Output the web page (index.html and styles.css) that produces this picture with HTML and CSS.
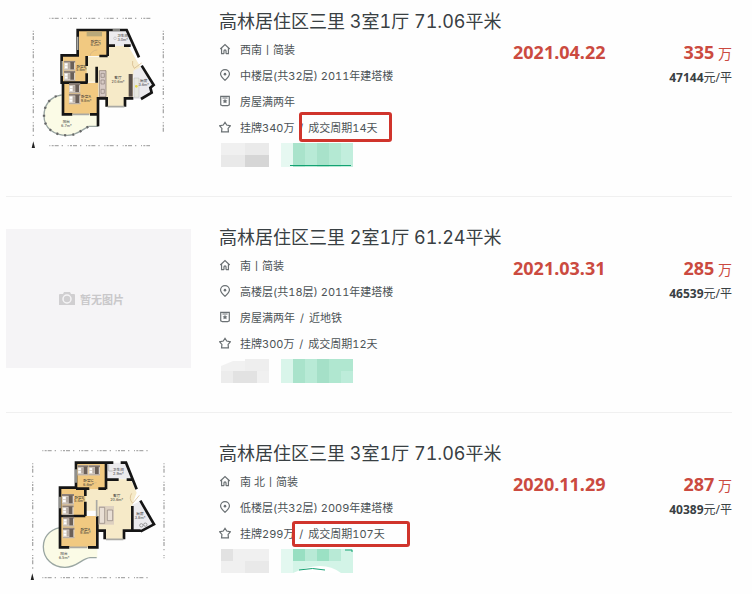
FILE: index.html
```html
<!DOCTYPE html>
<html lang="zh-CN">
<head>
  <meta charset="utf-8" />
  <meta name="viewport" content="width=device-width,initial-scale=1" />
  <title>高林居住区三里 成交记录</title>
  <link rel="stylesheet" href="styles.css">
</head>
<body>

<!-- shared icons and furniture -->
<svg class="defs" width="0" height="0" aria-hidden="true">
  <symbol id="i-home" viewBox="0 0 14 14">
    <path d="M1.500 7 7 1.800 12.500 7M3 6v6.500h2.800M11 6v6.500H8.200M5.800 12.500V9.200a1.200 1.200 0 0 1 2.400 0v3.300"/>
  </symbol>
  <symbol id="i-pin" viewBox="0 0 14 14">
    <path d="M7 13.300C4 10.500 1.800 8.400 1.800 5.900a5.200 5.200 0 0 1 10.400 0C12.200 8.400 10 10.500 7 13.300z"/>
    <circle class="dot" cx="7" cy="6" r="1.500"/>
  </symbol>
  <symbol id="i-tag" viewBox="0 0 14 14">
    <path d="M2 1.500h10v10l-2 1H4l-2-1zM4 3.500h6"/>
    <path class="dot" d="m7 4.500.9 1.600 1.900.2-1.300 1.300.3 1.900L7 8.700l-1.800.8.3-1.900-1.300-1.300 1.900-.2z"/>
  </symbol>
  <symbol id="i-star" viewBox="0 0 14 14">
    <path d="m7 1.500 2 3.200 4.300.9-2.700 3 .4 4.100H3l.4-4.100-2.700-3L5 4.700z"/>
  </symbol>
  <symbol id="bed" viewBox="0 0 36 32">
    <rect width="36" height="32" fill="#ddd5cc"/>
    <rect width="36" height="6" fill="#8d8078"/>
    <rect x="20" y="4" width="12" height="24" fill="#6a5f58"/>
    <rect x="3" y="9" width="8" height="6" fill="#fff"/>
    <rect x="3" y="18" width="8" height="6" fill="#fff"/>
    <path d="M14 8v18M17 8v18M0 30h36" stroke="#9c9088" stroke-width="2"/>
  </symbol>
</svg>

<ul class="list">

  <li class="item">
    <svg class="photo" viewBox="18 39 555 417" role="img" aria-label="户型图">
      <g class="ruler">
        <path d="M148 55H455M148 437H450M100 92V420M490 92V395"/>
      </g>
      <path d="m100 424-5 20h10z" fill="#222"/>
      <path class="balcony" d="M185 285C150 290 132 315 132 348c0 36 30 58 70 58 30 0 45-18 65-27h28v-36H185z"/>
      <path class="rail" d="M185 285C150 290 132 315 132 348c0 36 30 58 70 58 30 0 45-18 65-27h28"/>
      <path class="posts" d="M170 288C146 297 132 318 132 348c0 36 30 58 70 58 30 0 45-18 65-27"/>
      <path class="hall" d="M258 170h65v-35h60l38 65-22 28v67h-24v25h-58v-25h-30v-50h-34z"/>
      <path class="wet" d="M325 90h55l20 48h-75zM400 212l25-12 36 55-8 25-30 17h-23z"/>
      <path class="room" d="M233 90h90v78h-90zM185 168h75v78h-75zM188 248h106v95H188z"/>
      <path class="wall" d="M323 168V90h-90v76h-48v82h4v95h28M185 248h78M260 168v30M260 220v28M270 343h24v-48h26v25M294 295v84M323 168h-25M290 200v48M323 90h57l37 82M323 137h22M372 137h20M425 197l36 58-10 8 4 15-32 19M375 320v-25h25"/>
      <path class="window" d="M187 183v45M233 110v40M323 320h50M218 343h50M338 90h22"/>
      <path class="door" d="M403 205l22-16M403 205a25 25 0 0 1-5-22M270 168a22 22 0 0 1 22-18"/>
      <rect x="260" y="95" width="46" height="14" fill="#b9a97a"/>
      <use href="#bed" x="191" y="182" width="36" height="30"/>
      <use href="#bed" x="191" y="213" width="36" height="30"/>
      <use href="#bed" x="206" y="250" width="36" height="30"/>
      <use href="#bed" x="206" y="280" width="36" height="34"/>
      <path d="M298 212h20v78h-20z" fill="#d8cbc6" stroke="#7d7068" stroke-width="2"/>
      <path d="M303 220h10v12h-10zM303 240h10v12h-10zM303 268h10v12h-10z" fill="none" stroke="#8c8078" stroke-width="2"/>
      <rect x="386" y="222" width="12" height="68" fill="#5a504a"/>
      <path d="M402 234h15v58h-15z" fill="#e8e8e0" stroke="#aaa"/>
      <circle cx="409" cy="259" r="4" fill="#e5d84a"/>
      <circle cx="345" cy="115" r="4" fill="none" stroke="#999"/>
      <g class="label">
        <text x="287" y="128">卧室C</text><text x="287" y="139">6.2m²</text>
        <text x="244" y="203">卧室B</text><text x="244" y="214">5.6m²</text>
        <text x="258" y="294">卧室A</text><text x="258" y="305">9.8m²</text>
        <text x="354" y="236">客厅</text><text x="354" y="248">20.6m²</text>
        <text x="368" y="112">卫生间</text><text x="368" y="123">3.0m²</text>
        <text x="431" y="245">厨房</text><text x="431" y="257">3.6m²</text>
        <text x="199" y="368">阳台</text><text x="199" y="380">6.7m²</text>
      </g>
    </svg>
    <div class="info">
      <h2 class="title">高林居住区三里 3室1厅 71.06平米</h2>
      <ul class="meta">
        <li><svg class="icon"><use href="#i-home"/></svg>西南丨简装</li>
        <li><svg class="icon"><use href="#i-pin"/></svg>中楼层(共32层) 2011年建塔楼</li>
        <li><svg class="icon"><use href="#i-tag"/></svg>房屋满两年</li>
        <li><svg class="icon"><use href="#i-star"/></svg><span>挂牌340万 <i>/</i> <span class="mark">成交周期14天</span></span></li>
      </ul>
      <svg class="mosaic" viewBox="0 0 134 24" aria-hidden="true">
        <rect x="2" width="24" height="12" fill="#f0f0f0"/>
        <rect x="26" width="24" height="12" fill="#eaeaea"/>
        <rect x="2" y="12" width="24" height="12" fill="#e9e9e9"/>
        <rect x="26" y="12" width="24" height="12" fill="#d6d6d6"/>
        <rect x="62" width="12" height="24" fill="#e6f8f1"/>
        <rect x="74" width="12" height="24" fill="#a9e3cb"/>
        <rect x="86" width="12" height="24" fill="#b8ead6"/>
        <rect x="98" width="12" height="24" fill="#a8e2ca"/>
        <rect x="110" width="12" height="24" fill="#b4e9d3"/>
        <rect x="122" width="12" height="24" fill="#c2eedd"/>
        <rect x="71" y="22" width="61" height="1" fill="#14a273"/>
      </svg>
    </div>
    <div class="date">2021.04.22</div>
    <div class="price">
      <div class="total"><b>335</b> 万</div>
      <div class="unit"><b>47144</b>元/平</div>
    </div>
  </li>

  <li class="item">
    <div class="photo empty">
      <svg class="camera" viewBox="0 0 16 14" aria-hidden="true">
        <path d="M1 2h3l1-2h6l1 2h3a1 1 0 0 1 1 1v10H0V3a1 1 0 0 1 1-1z" fill="#d0cfd1"/>
        <circle cx="8" cy="7" r="4" fill="#d0cfd1" stroke="#f5f4f6" stroke-width="1.500"/>
      </svg>
      暂无图片
    </div>
    <div class="info">
      <h2 class="title">高林居住区三里 2室1厅 61.24平米</h2>
      <ul class="meta">
        <li><svg class="icon"><use href="#i-home"/></svg>南丨简装</li>
        <li><svg class="icon"><use href="#i-pin"/></svg>高楼层(共18层) 2011年建塔楼</li>
        <li><svg class="icon"><use href="#i-tag"/></svg><span>房屋满两年 <i>/</i> 近地铁</span></li>
        <li><svg class="icon"><use href="#i-star"/></svg><span>挂牌300万 <i>/</i> 成交周期12天</span></li>
      </ul>
      <svg class="mosaic" viewBox="0 0 134 24" aria-hidden="true">
        <path d="M2 12V7l12-5h12v10z" fill="#f1f1f1"/>
        <rect x="26" width="24" height="12" fill="#eeeeee"/>
        <rect x="2" y="12" width="12" height="12" fill="#ececec"/>
        <rect x="14" y="12" width="24" height="12" fill="#e2e2e2"/>
        <rect x="38" y="12" width="12" height="12" fill="#f0f0f0"/>
        <rect x="62" width="12" height="24" fill="#d9f5ea"/>
        <rect x="74" width="12" height="24" fill="#a9e3cb"/>
        <rect x="86" width="12" height="24" fill="#b8ead6"/>
        <rect x="98" width="12" height="24" fill="#a5e0c8"/>
        <rect x="110" width="12" height="24" fill="#b0e7d0"/>
        <rect x="122" width="12" height="12" fill="#b0e7d0"/>
        <rect x="122" y="12" width="12" height="12" fill="#bdecda"/>
      </svg>
    </div>
    <div class="date">2021.03.31</div>
    <div class="price">
      <div class="total"><b>285</b> 万</div>
      <div class="unit"><b>46539</b>元/平</div>
    </div>
  </li>

  <li class="item">
    <svg class="photo" viewBox="18 45 555 417" role="img" aria-label="户型图">
      <g class="ruler">
        <path d="M127 62H455M127 443H455M98 100V425M492 100V385"/>
      </g>
      <path d="m97 430-5 20h10z" fill="#222"/>
      <path class="balcony" d="M180 293C145 300 130 325 130 350c0 36 28 62 65 62 37 0 50-27 75-29h22v-30H180z"/>
      <path class="rail" d="M180 293C145 300 130 325 130 350c0 36 28 62 65 62 37 0 50-27 75-29h20"/>
      <path class="hall" d="M255 178h63v-30h74l18 40-12 32v82h-25v26h-60v-26h-23v-60h-35z"/>
      <path class="wet" d="M320 98h58l18 48h-76zM397 225l24-12 41 68-40 23h-25z"/>
      <path class="room" d="M228 98h90v80h-90zM180 173h76v85h-76zM180 258h112v94H180z"/>
      <path class="wall" d="M318 178V98h-90v75h-48v179h28M180 258h76M256 178v20M256 215v43M264 352h28V258M228 176h40M295 176h23M292 302h22v26M318 98h22M362 98h16l32 80M318 149h38M380 149h17M421 212l41 71-40 21M372 328v-26h50M397 228v74"/>
      <path class="window" d="M180 200v35M228 118v40M318 328h52M210 352h52M290 210v50"/>
      <path class="door" d="M398 220l20-24M398 220a25 25 0 0 1-3-30M268 176a22 22 0 0 1 22-18"/>
      <use href="#bed" x="232" y="102" width="34" height="38"/>
      <use href="#bed" x="266" y="102" width="34" height="38"/>
      <use href="#bed" x="186" y="192" width="36" height="32"/>
      <use href="#bed" x="186" y="226" width="36" height="30"/>
      <use href="#bed" x="188" y="260" width="36" height="30"/>
      <use href="#bed" x="188" y="292" width="36" height="34"/>
      <path d="M296 228h46v56h-46z" fill="#ddd0c0"/>
      <path d="M298 232h16v48h-16zM322 240h16v32h-16z" fill="#e9dfd5" stroke="#8c8078" stroke-width="2"/>
      <circle cx="424" cy="286" r="5" fill="none" stroke="#777" stroke-width="2"/>
      <circle cx="436" cy="284" r="5" fill="none" stroke="#777" stroke-width="2"/>
      <path d="M326 103v20h12" fill="none" stroke="#aaa" stroke-width="2"/>
      <g class="label">
        <text x="265" y="156">卧室C</text><text x="265" y="167">6.6m²</text>
        <text x="238" y="206">卧室B</text><text x="238" y="217">5.4m²</text>
        <text x="256" y="302">卧室A</text><text x="256" y="313">9.8m²</text>
        <text x="350" y="202">客厅</text><text x="350" y="214">20.6m²</text>
        <text x="355" y="122">卫生间</text><text x="355" y="134">2.9m²</text>
        <text x="420" y="254">厨房</text><text x="420" y="266">3.8m²</text>
        <text x="192" y="374">阳台</text><text x="192" y="386">6.5m²</text>
      </g>
    </svg>
    <div class="info">
      <h2 class="title">高林居住区三里 3室1厅 71.06平米</h2>
      <ul class="meta">
        <li><svg class="icon"><use href="#i-home"/></svg>南 北丨简装</li>
        <li><svg class="icon"><use href="#i-pin"/></svg>低楼层(共32层) 2009年建塔楼</li>
        <li><svg class="icon"><use href="#i-star"/></svg><span>挂牌299万 <span class="mark wide"><i>/</i> 成交周期107天</span></span></li>
      </ul>
      <svg class="mosaic" viewBox="0 0 134 24" aria-hidden="true">
        <rect x="2" width="48" height="24" fill="#f0f0f0"/>
        <rect x="2" width="12" height="12" fill="#e2e2e2"/>
        <rect x="26" y="12" width="24" height="12" fill="#e9e9e9"/>
        <rect x="62" width="72" height="24" fill="#d3f4e7"/>
        <rect x="62" width="12" height="24" fill="#e3f8f0"/>
        <rect x="74" width="12" height="12" fill="#98dfc2"/>
        <rect x="86" width="12" height="12" fill="#b8ead6"/>
        <rect x="98" width="12" height="12" fill="#9be1c4"/>
        <rect x="110" width="12" height="12" fill="#b8ead6"/>
        <path d="M74 24q30-14 48 0z" fill="#fff"/>
        <path d="M80 21q14-3 26 0M126 1h7v2" fill="none" stroke="#14a273"/>
      </svg>
    </div>
    <div class="date">2020.11.29</div>
    <div class="price">
      <div class="total"><b>287</b> 万</div>
      <div class="unit"><b>40389</b>元/平</div>
    </div>
  </li>

</ul>
</body>
</html>
```

FILE: styles.css
```css
body{margin:0;background:#fefefe;color:#394043;font-family:Inter,"Noto Sans CJK SC",sans-serif;
     font-variant-numeric:tabular-nums}
ul{margin:0;padding:0;list-style:none}
.defs{position:absolute}

.list{padding:0 20px 0 6px}
.item{display:flex;padding:32px 0 29px;border-bottom:1px solid #f0f0f0}
.item:first-child{padding-top:13px}
.item:last-child{padding-bottom:0;border-bottom:0}

.photo{flex:none;width:185px;height:139px}
.empty{display:flex;align-items:center;justify-content:center;gap:5px;box-sizing:border-box;
       padding-right:14px;background:#f5f4f6;color:#c9c8ca;font-size:11px;font-weight:700}
.camera{width:16px;height:14px}

/* floor plans */
.ruler{fill:none;stroke:#aaa;stroke-width:4;stroke-dasharray:3 4 6 3 12 9 4 14}
.balcony{fill:#fbfbe6}
.posts{fill:none;stroke:#666;stroke-width:7;stroke-dasharray:6 18}
.rail{fill:none;stroke:#9aa6a2;stroke-width:4}
.hall{fill:#f6eac8}
.wet{fill:#ecebee}
.room{fill:#f1c981}
.wall{fill:none;stroke:#151515;stroke-width:8}
.window{fill:none;stroke:#a9a9a4;stroke-width:5}
.door{fill:none;stroke:#d0b080;stroke-width:2}
.label{fill:#333;font-size:11px;text-anchor:middle}

.info{flex:1;margin-left:28px}
.title{margin:0 0 5px;font-size:18px;line-height:18px;font-weight:400;white-space:nowrap}
.meta{color:#4c5356;font-size:11px}
.meta li{display:flex;align-items:center;gap:9px;height:26px;white-space:nowrap}
.meta i{margin:0 2px;font-style:normal}
.icon{width:12px;height:12px;fill:none;stroke:#6b7174;stroke-width:1.4}
#i-pin .dot,#i-tag .dot{fill:#6b7174;stroke:none}
.mosaic{display:block;width:134px;height:24px;margin-top:3px}

/* red frame round the deal period */
.mark{position:relative}
.mark::after{content:"";position:absolute;inset:-9px -14px -7px -9px;border:3px solid #d0342c;
             border-radius:3px}
.wide::after{inset:-6px -25px -6px -5px}

.date,.price{padding-top:27px;font-family:"Noto Sans","Noto Sans CJK SC",sans-serif}
.date{width:91px;color:#cb4a40;font-size:18px;line-height:24px;font-weight:700}
.price{width:128px;text-align:right}
.total{color:#cb4a40;font-size:14px;line-height:24px}
.total b{font-size:18px}
.unit{font-size:12px;line-height:24px}
```
